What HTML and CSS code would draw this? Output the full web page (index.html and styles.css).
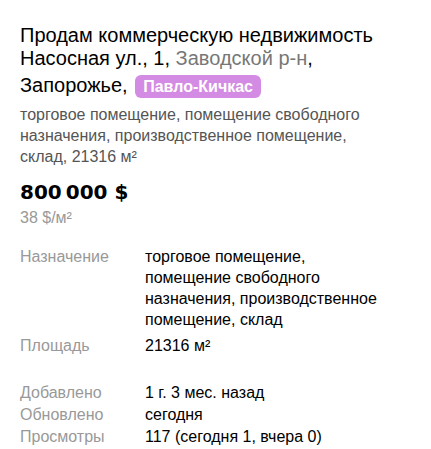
FILE: index.html
```html
<!DOCTYPE html>
<html lang="ru">
<head>
    <meta charset="UTF-8">
    <meta name="viewport" content="width=device-width, initial-scale=1.0">
    <title>Продам коммерческую недвижимость</title>
    <link rel="stylesheet" href="styles.css">
</head>
<body>

    <div class="listing">
        <h1 class="title">Продам коммерческую недвижимость</h1>
        <div class="address">
            Насосная ул., 1, <span class="district">Заводской р-н</span>,
            Запорожье, <span class="badge">Павло-Кичкас</span>
        </div>

        <p class="summary">торговое помещение, помещение свободного назначения, производственное помещение, склад, 21316 м²</p>

        <div class="price">800&#8201;000 $</div>
        <div class="price-per">38 $/м²</div>

        <table class="params">
            <tr>
                <td class="label">Назначение</td>
                <td class="value">торговое помещение, помещение свободного назначения, производственное помещение, склад</td>
            </tr>
            <tr>
                <td class="label">Площадь</td>
                <td class="value">21316 м²</td>
            </tr>
        </table>

        <!-- stats block -->
        <table class="params stats">
            <tr>
                <td class="label">Добавлено</td>
                <td class="value">1 г. 3 мес. назад</td>
            </tr>
            <tr>
                <td class="label">Обновлено</td>
                <td class="value">сегодня</td>
            </tr>
            <tr>
                <td class="label">Просмотры</td>
                <td class="value">117 (сегодня 1, вчера 0)</td>
            </tr>
        </table>
    </div>

</body>
</html>
```

FILE: styles.css
```css
body {
    font-family: "Liberation Sans", Arial, sans-serif;
    margin: 0;
    padding: 0;
    background-color: #fff;
    color: #000;
}

.listing {
    padding: 24px 20px 0 20px;
}

.title {
    font-size: 20px;
    font-weight: normal;
    line-height: 23px;
    margin: 0;
}

.address {
    font-size: 20px;
    line-height: 23px;
}

.district {
    color: #777;
}

.badge {
    display: inline-block;
    background-color: #d48be4;
    color: #fff;
    font-size: 16px;
    font-weight: bold;
    line-height: 23px;
    padding: 0 8px;
    border-radius: 6px;
    margin: 5px 0 0 2px;
}

.summary {
    max-width: 350px;
    font-size: 16px;
    line-height: 21px;
    color: #555;
    margin: 6px 0 0 0;
}

.price {
    font-family: "DejaVu Sans", Verdana, sans-serif;
    font-size: 20px;
    font-weight: bold;
    line-height: 24px;
    margin-top: 13px;
}

.price-per {
    font-size: 16px;
    line-height: 20px;
    color: #999;
    margin-top: 4px;
}

.params {
    border-collapse: collapse;
    font-size: 16px;
    line-height: 21px;
    margin-top: 16px;
}

.params td {
    padding: 2px 0 3px 0;
    vertical-align: top;
}

.params .label {
    color: #999;
    width: 125px;
}

.params .value {
    width: 236px;
}

.stats {
    margin-top: 23px;
    line-height: 22px;
}

.stats td {
    padding: 0;
}
```
